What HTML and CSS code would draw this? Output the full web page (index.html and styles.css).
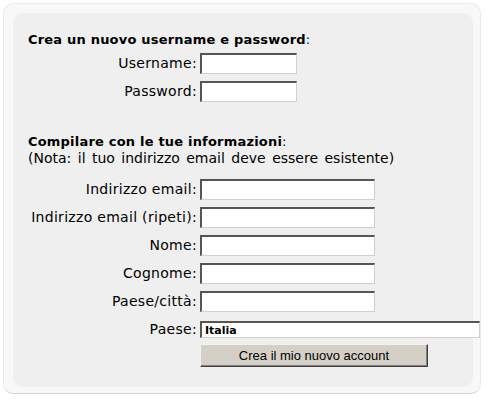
FILE: index.html
```html
<!DOCTYPE html>
<html lang="it">
<head>
<meta charset="utf-8">
<title>Crea account</title>
<link rel="stylesheet" href="styles.css">
</head>
<body>
<div class="frame">
  <div class="panel">
    <h2 class="title"><b>Crea un nuovo username e password</b>:</h2>
    <div class="grid grid-login">
      <label class="label" for="u">Username:</label>
      <input class="field short" id="u" type="text">
      <label class="label" for="p">Password:</label>
      <input class="field short" id="p" type="password">
    </div>

    <h2 class="title title-info"><b>Compilare con le tue informazioni</b>:</h2>
    <p class="note">(Nota: il tuo indirizzo email deve essere esistente)</p>
    <div class="grid grid-info">
      <label class="label" for="e1">Indirizzo email:</label>
      <input class="field long" id="e1" type="text">
      <label class="label" for="e2">Indirizzo email (ripeti):</label>
      <input class="field long" id="e2" type="text">
      <label class="label" for="n">Nome:</label>
      <input class="field long" id="n" type="text">
      <label class="label" for="c">Cognome:</label>
      <input class="field long" id="c" type="text">
      <label class="label" for="ci">Paese/città:</label>
      <input class="field long" id="ci" type="text">
      <label class="label" for="pa">Paese:</label>
      <select class="country" id="pa"><option>Italia</option></select>
      <span class="spacer"></span>
      <button class="submit" type="button">Crea il mio nuovo account</button>
    </div>
  </div>
</div>
</body>
</html>
```

FILE: styles.css
```css
html, body {
  margin: 0;
  background: #ffffff;
}

body {
  font-family: "DejaVu Sans", Verdana, sans-serif;
  font-size: 14px;
  color: #000000;
  overflow: hidden;
}

.frame {
  margin: 3px 0 0 3px;
  width: 478px;
  height: 391px;
  box-sizing: border-box;
  background: #f8f8f8;
  border: 1px solid #ebebeb;
  border-bottom-color: #d6d2cc;
  border-radius: 10px;
  padding: 9px 7px 6px 9px;
}

.panel {
  height: 100%;
  box-sizing: border-box;
  background: #efefef;
  border-radius: 10px;
  padding: 19px 0 0 15px;
}

.title {
  margin: 0;
  font-size: 13px;
  line-height: 16px;
  font-weight: normal;
  letter-spacing: 0.2px;
}

.title b {
  font-weight: bold;
}

.title-info {
  margin-top: 32px;
}

.note {
  margin: 0;
  line-height: 16px;
  word-spacing: 2px;
}

.grid {
  display: grid;
  grid-template-columns: 169px auto;
  column-gap: 3px;
  row-gap: 7px;
  align-items: center;
  justify-content: start;
}

.grid-login {
  margin-top: 5px;
}

.grid-info {
  margin-top: 13px;
}

.label {
  text-align: right;
  white-space: nowrap;
  line-height: 21px;
  letter-spacing: 0.3px;
}

.field {
  display: block;
  box-sizing: border-box;
  height: 21px;
  margin: 0;
  padding: 0 2px;
  border-style: solid;
  border-width: 2px 1px 1px 2px;
  border-color: #555555 #d4d0c8 #d4d0c8 #555555;
  background: #ffffff;
  font: 12px "DejaVu Sans", sans-serif;
  outline: none;
}

.short {
  width: 97px;
}

.long {
  width: 175px;
}

.country {
  appearance: none;
  -webkit-appearance: none;
  display: block;
  box-sizing: border-box;
  width: 280px;
  height: 17px;
  margin: 0;
  padding: 0 3px;
  border-style: solid;
  border-width: 2px 1px 1px 2px;
  border-color: #555555 #d4d0c8 #d4d0c8 #555555;
  border-radius: 0;
  background: #ffffff;
  font: bold 11px "DejaVu Sans", sans-serif;
  color: #000000;
  line-height: 13px;
}

.submit {
  display: block;
  box-sizing: border-box;
  width: 228px;
  height: 23px;
  margin: -3px 0 0 0;
  padding: 0;
  background: #d4d0c8;
  border: 1px solid;
  border-color: #f4f2ee #404040 #404040 #f4f2ee;
  box-shadow: inset -1px -1px 0 #808080;
  font: 13px "Liberation Sans", Arial, sans-serif;
  color: #000000;
  text-align: center;
}
```
